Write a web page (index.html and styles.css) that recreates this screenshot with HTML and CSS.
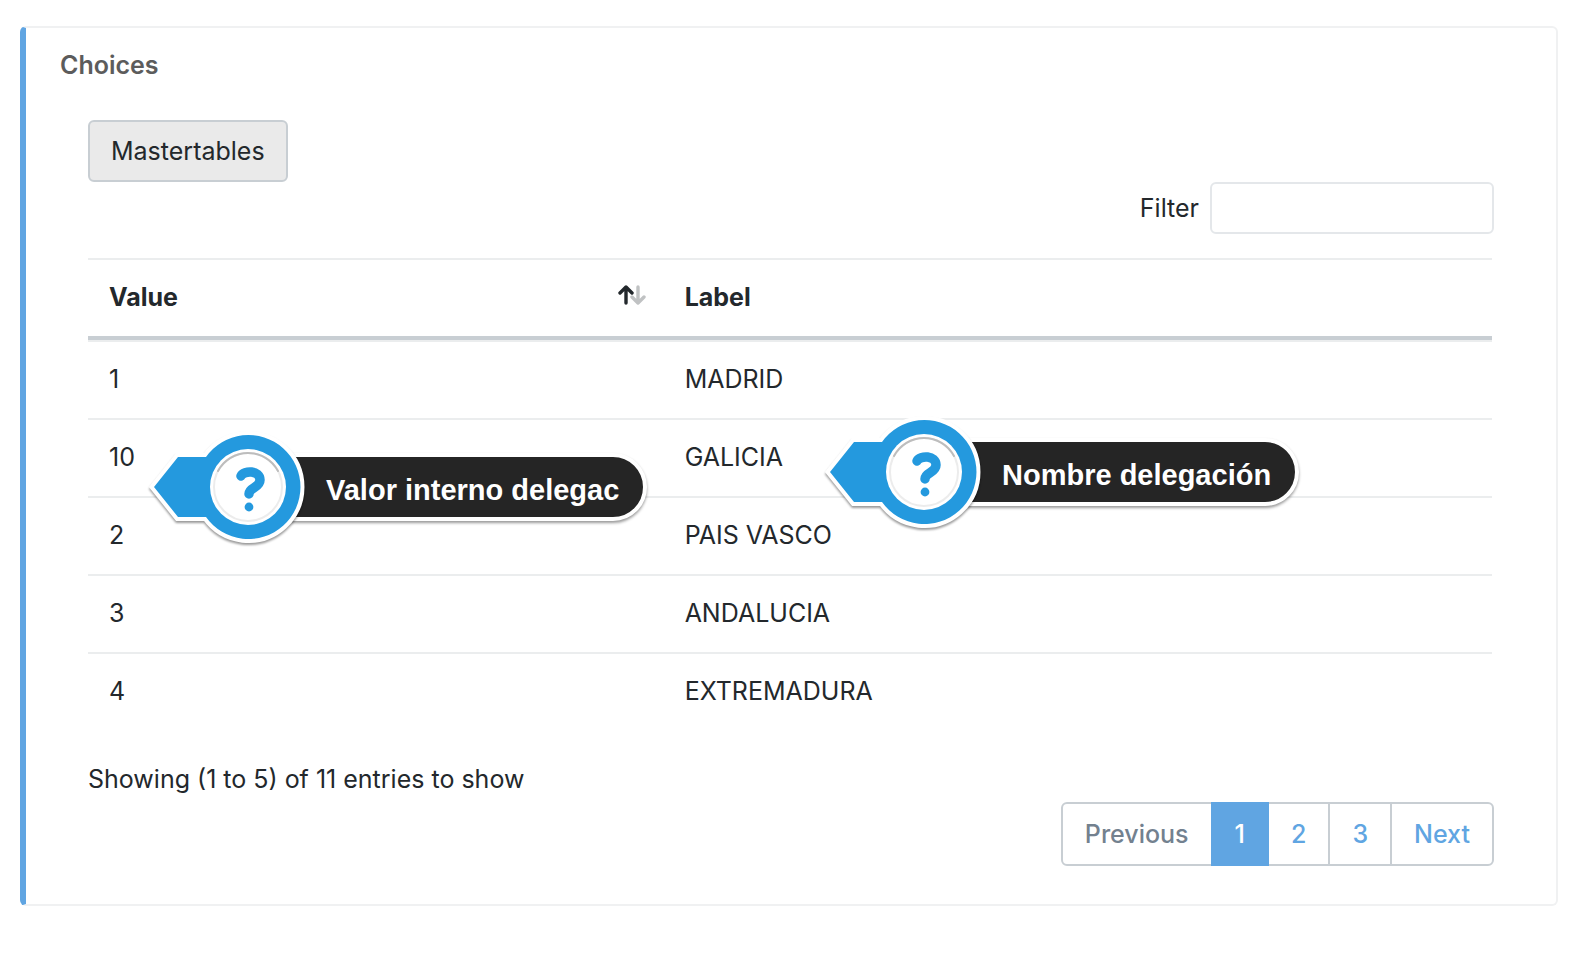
FILE: index.html
```
<!DOCTYPE html>
<html lang="en">
<head>
	<title>Choices</title>
	<meta charset="UTF-8">
	<link rel="stylesheet" href="styles.css">
</head>
<body>
	<div class="card">
		<h1 class="card_title">Choices</h1>
		<div class="card_body">
			<button type="button" class="btn">Mastertables</button>
			<div class="filter">
				<label for="filter">Filter</label>
				<input type="text" id="filter" class="filter_box">
			</div>
			<div class="table_box">
				<table class="table">
					<thead>
						<tr>
							<th class="col_value">
								<div class="sort">
									<span>Value</span>
									<svg class="sort_icon" width="28" height="24" viewBox="0 0 28 24">
										<path class="sort_down" d="M20 2V18M14 12L20 18L26 12"/>
										<path class="sort_up" d="M8 18V2M2 8L8 2L14 8"/>
									</svg>
								</div>
							</th>
							<th>Label</th>
						</tr>
					</thead>
					<tbody>
						<tr><td>1</td><td>MADRID</td></tr>
						<tr><td>10</td><td>GALICIA</td></tr>
						<tr><td>2</td><td>PAIS VASCO</td></tr>
						<tr><td>3</td><td>ANDALUCIA</td></tr>
						<tr><td>4</td><td>EXTREMADURA</td></tr>
					</tbody>
				</table>
			</div>
			<p class="info">Showing (1 to 5) of 11 entries to show</p>
			<ul class="pagination">
				<li><a href="#" class="disabled">Previous</a></li>
				<li><a href="#" class="active">1</a></li>
				<li><a href="#">2</a></li>
				<li><a href="#">3</a></li>
				<li><a href="#">Next</a></li>
			</ul>
		</div>

		<!-- help markers -->
		<div class="tip tip_value">
			<svg class="tip_mark" width="160" height="120" viewBox="0 0 160 120">
				<path class="tip_shape" d="M8 60L32 30H60A52 52 0 1 1 60 90H32Z"/>
				<circle class="tip_hole" cx="102" cy="60" r="38"/>
				<circle class="tip_ring" cx="102" cy="60" r="34"/>
				<path class="tip_shade" d="M72 44A34 34 0 0 1 132 44"/>
				<path class="tip_hook" d="M95 49C98 43 114 43 114 53C114 61 103 60 103 67"/>
				<circle class="tip_dot" cx="103" cy="80" r="4.4"/>
			</svg>
			<span class="tip_text">Valor interno delegac</span>
		</div>
		<div class="tip tip_label">
			<svg class="tip_mark" width="160" height="120" viewBox="0 0 160 120">
				<path class="tip_shape" d="M8 60L32 30H60A52 52 0 1 1 60 90H32Z"/>
				<circle class="tip_hole" cx="102" cy="60" r="38"/>
				<circle class="tip_ring" cx="102" cy="60" r="34"/>
				<path class="tip_shade" d="M72 44A34 34 0 0 1 132 44"/>
				<path class="tip_hook" d="M95 49C98 43 114 43 114 53C114 61 103 60 103 67"/>
				<circle class="tip_dot" cx="103" cy="80" r="4.4"/>
			</svg>
			<span class="tip_text">Nombre delegación</span>
		</div>
	</div>
</body>
</html>
```
FILE: styles.css
```
*{
	margin: 0;
	padding: 0;
	box-sizing: border-box;
}
body{
	background-color: #fff;
	color: #23282c;
	font-family: Inter, "Liberation Sans", sans-serif;
	font-size: 25px;
	line-height: 38px;
}
.card{
	position: relative;
	margin: 26px 30px 60px 20px;
	padding: 18px 62px 38px 62px;
	border: 2px solid #f0f1f2;
	border-left: 6px solid #60a5e2;
	border-radius: 6px;
}
.card_title{
	margin-left: -28px;
	margin-bottom: 36px;
	color: #5c5c5c;
	font-size: 25px;
	font-weight: 600;
}
.card_body{
	display: flex;
	flex-direction: column;
}
.btn{
	align-self: flex-start;
	height: 62px;
	padding: 0 21px;
	border: 2px solid #c8ced3;
	border-radius: 6px;
	background-color: #eaeaea;
	color: #23282c;
	font: inherit;
	cursor: pointer;
}
.filter{
	display: flex;
	justify-content: flex-end;
	align-items: center;
	gap: 11px;
	margin-bottom: 24px;
}
.filter_box{
	width: 284px;
	height: 52px;
	padding: 0 12px;
	border: 2px solid #e4e7ea;
	border-radius: 6px;
	background-color: #fff;
	font: inherit;
}
.table_box{
	padding-right: 2px;
}
.table{
	width: 100%;
	border-spacing: 0;
	table-layout: fixed;
}
.table th, .table td{
	height: 78px;
	padding: 0 21px 2px;
	border-top: 2px solid #ebedee;
	text-align: left;
}
.table th{
	height: 82px;
	border-bottom: 4px solid #c8ced3;
	font-weight: 700;
}
.table .col_value{
	width: 41%;
	padding-right: 18px;
}
.sort{
	display: flex;
	justify-content: space-between;
	align-items: center;
}
.sort_icon{
	fill: none;
	stroke-width: 3.4;
	stroke-linecap: round;
	stroke-linejoin: round;
}
.sort_up{
	stroke: #23282c;
}
.sort_down{
	stroke: #c0c2c3;
}
.info{
	margin-top: 30px;
	margin-bottom: 4px;
}
.pagination{
	display: flex;
	align-self: flex-end;
	list-style: none;
}
.pagination a{
	display: block;
	height: 64px;
	padding: 0 22px;
	margin-left: -2px;
	border: 2px solid #c8ced3;
	color: #60a5e2;
	font-weight: 500;
	line-height: 60px;
	text-decoration: none;
}
.pagination li:first-child a{
	border-radius: 6px 0 0 6px;
}
.pagination li:last-child a{
	border-radius: 0 6px 6px 0;
}
.pagination .disabled{
	color: #73818f;
}
.pagination .active{
	position: relative;
	z-index: 1;
	border-color: #60a5e2;
	background-color: #60a5e2;
	color: #fff;
}
.tip{
	position: absolute;
	display: flex;
	align-items: center;
}
.tip_value{
	left: 120px;
	top: 399px;
}
.tip_label{
	left: 796px;
	top: 384px;
}
.tip_mark{
	position: relative;
	z-index: 1;
	overflow: visible;
	filter: drop-shadow(0 2px 1px rgba(0,0,0,0.4));
}
.tip_shape{
	fill: #2499de;
	stroke: #fff;
	stroke-width: 8;
	paint-order: stroke;
}
.tip_hole{
	fill: #fff;
}
.tip_ring{
	fill: none;
	stroke: #ececec;
	stroke-width: 2;
}
.tip_shade{
	fill: none;
	stroke: #bdbdbd;
	stroke-width: 2;
	stroke-linecap: round;
}
.tip_hook{
	fill: none;
	stroke: #2499de;
	stroke-width: 9.5;
	stroke-linecap: round;
}
.tip_dot{
	fill: #2499de;
}
.tip_text{
	height: 68px;
	margin-left: -58px;
	padding: 0 24px 0 74px;
	border: 4px solid #fff;
	border-radius: 34px;
	background-color: #252525;
	box-shadow: 0 2px 3px rgba(0,0,0,0.4);
	color: #fff;
	font-family: "Liberation Sans", sans-serif;
	font-size: 29px;
	font-weight: bold;
	line-height: 66px;
	white-space: nowrap;
}
```
